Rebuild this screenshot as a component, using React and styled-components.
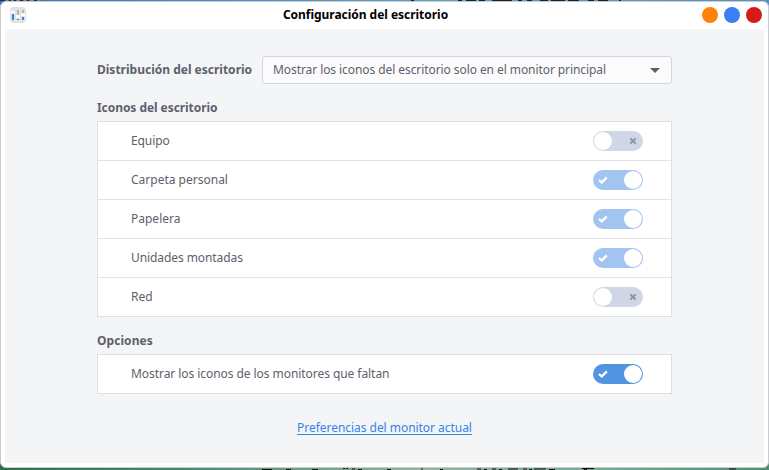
import React from "react";
import styled, { createGlobalStyle } from "styled-components";

const Global = createGlobalStyle`
  * { box-sizing: border-box; }
  body { margin: 0; overflow: hidden; font-family: "Noto Sans", sans-serif; font-size: 12px; color: #5c616c; }
`;

const Desktop = styled.div`
  width: 769px;
  height: 470px;
  padding: 1px 0 2px;
  background:
    linear-gradient(90deg, #3a77b8, #62a4cf 60%, #5590bf) 0 0 / 100% 12px no-repeat,
    linear-gradient(90deg, #2f6d4a, #4a8a6c 25%, #8fb5a5 55%, #6fa892 80%, #4f8d75) 0 100% / 100% 12px no-repeat,
    #c8cacb;
`;

const Strip = styled.svg`
  position: absolute;
  left: 0;
  top: ${(p) => p.$top}px;
`;

const Window = styled.main`
  width: 769px;
  height: 467px;
  display: flex;
  flex-direction: column;
  padding: 0 4px 4px;
  background: #fff;
  border: 1px solid #c9cbcd;
  border-radius: 6px;
`;

const TitleBar = styled.header`
  height: 27px;
  flex: none;
  display: grid;
  grid-template-columns: 72px 1fr 72px;
  align-items: center;
  padding-bottom: 1px;
`;

const AppIcon = styled.svg`
  margin: 0 0 0 5px;
  display: block;
`;

const Title = styled.h1`
  margin: 0;
  font-size: 12px;
  line-height: 16px;
  font-weight: 700;
  letter-spacing: -0.03px;
  color: #000;
  text-align: center;
  white-space: nowrap;
  transform: translateX(-19px);
`;

const Controls = styled.div`
  display: flex;
  justify-content: flex-end;
  gap: 6px;
  padding-right: 2px;
`;

const Control = styled.button`
  width: 16px;
  height: 16px;
  padding: 0;
  border: 0;
  border-radius: 50%;
  background: ${(p) => p.$color};
`;

const Content = styled.section`
  flex: 1;
  display: flex;
  flex-direction: column;
  padding: 27px 92px 0;
  background: #f4f5f7;
`;

const LayoutRow = styled.div`
  display: flex;
  align-items: center;
  justify-content: space-between;
  height: 28px;
`;

const Heading = styled.h2`
  margin: 0;
  font-size: 12px;
  font-weight: 700;
  line-height: 16px;
  white-space: nowrap;
`;

const SectionHeading = styled(Heading)`
  margin: 16px 0 5px;
  letter-spacing: ${(p) => p.$tracking || 0}px;
`;

const Select = styled.button`
  width: 410px;
  height: 28px;
  display: flex;
  align-items: center;
  justify-content: space-between;
  padding: 0 11px 1px 10px;
  border: 1px solid #cfd6e6;
  border-radius: 3px;
  background: #fbfbfc;
  color: inherit;
  font: inherit;
  letter-spacing: -0.075px;
  white-space: nowrap;
`;

const Arrow = styled.svg`
  position: relative;
  top: 1px;
`;

const Card = styled.div`
  border: 1px solid #dcdfe3;
  background: #fff;
`;

const Row = styled.div`
  height: 39px;
  display: flex;
  align-items: center;
  justify-content: space-between;
  padding: 0 28px 0 33px;
  border-bottom: 1px solid #e2e3e5;
  &:last-child { height: 38px; border-bottom: 0; }
`;

const RowLabel = styled.span`
  line-height: 16px;
  letter-spacing: ${(p) => p.$tracking}px;
`;

const Track = styled.span`
  width: 50px;
  height: 20px;
  display: flex;
  flex-direction: ${(p) => (p.$on ? "row-reverse" : "row")};
  align-items: center;
  justify-content: space-between;
  padding: 0 ${(p) => (p.$on ? "1px 0 5px" : "6px 0 1px")};
  border-radius: 10px;
  background: ${(p) => (!p.$on ? "#cfd6e6" : p.$muted ? "#a2c4f0" : "#5294e2")};
`;

const Knob = styled.span`
  width: 18px;
  height: 18px;
  border-radius: 50%;
  background: #fff;
`;

const LinkRow = styled.div`
  margin-top: 26px;
  text-align: center;
  line-height: 16px;
`;

const Link = styled.a`
  color: #3584e4;
  letter-spacing: -0.04px;
  text-decoration: underline;
  text-underline-offset: 2px;
  text-decoration-thickness: 1px;
`;

function Toggle({ on, muted }) {
  return (
    <Track $on={on} $muted={muted} role="switch" aria-checked={on}>
      <Knob />
      {on ? (
        <svg width="10" height="8" viewBox="0 0 10 8">
          <path d="M1 4 3.8 6.4 8.8 1.4" fill="none" stroke="#fff" strokeWidth="2.3" />
        </svg>
      ) : (
        <svg width="8" height="8" viewBox="0 0 8 8">
          <path d="M1.3 1.3 6.7 6.7M6.7 1.3 1.3 6.7" fill="none" stroke="#8b92a2" strokeWidth="1.9" />
        </svg>
      )}
    </Track>
  );
}

const icons = [
  ["Equipo", false, -0.1],
  ["Carpeta personal", true, 0],
  ["Papelera", true, 0],
  ["Unidades montadas", true, -0.08],
  ["Red", false, 0],
];

export default function App() {
  return (
    <>
      <Global />
      <Desktop>
        <Window>
          <TitleBar>
            <AppIcon width="16" height="16" viewBox="0 0 16 16">
              <rect width="16" height="16" rx="4" fill="#e2e2e2" />
              <path d="M8 3v5M13 3v4" stroke="#b4b4b4" strokeWidth="2" />
              <path d="M3 7v6M13 10v3M8 12v1" stroke="#3480df" strokeWidth="2" />
              <path d="M1 4h4v2.5H1zM6 8.2h4v2.6H6zM11 6.3h4v2.7h-4z" fill="#fff" />
            </AppIcon>
            <Title>Configuración del escritorio</Title>
            <Controls>
              <Control $color="#ff8105" aria-label="Minimizar" />
              <Control $color="#3880f4" aria-label="Maximizar" />
              <Control $color="#d51a1a" aria-label="Cerrar" />
            </Controls>
          </TitleBar>
          <Content>
            <LayoutRow>
              <Heading>Distribución del escritorio</Heading>
              <Select>
                Mostrar los iconos del escritorio solo en el monitor principal
                <Arrow width="10" height="5" viewBox="0 0 10 5">
                  <path d="M0 0h10L5 5z" fill="#5c616c" />
                </Arrow>
              </Select>
            </LayoutRow>
            <SectionHeading $tracking={-0.06}>Iconos del escritorio</SectionHeading>
            <Card>
              {icons.map(([name, on, tracking]) => (
                <Row key={name}>
                  <RowLabel $tracking={tracking}>{name}</RowLabel>
                  <Toggle on={on} muted />
                </Row>
              ))}
            </Card>
            <SectionHeading $tracking={0.06}>Opciones</SectionHeading>
            <Card>
              <Row>
                <RowLabel $tracking={-0.06}>Mostrar los iconos de los monitores que faltan</RowLabel>
                <Toggle on />
              </Row>
            </Card>
            <LinkRow>
              <Link>Preferencias del monitor actual</Link>
            </LinkRow>
          </Content>
        </Window>
      </Desktop>
      <Strip $top={0} width="769" height="1" viewBox="0 0 769 1">
        <path d="M0 .5h5M9 .5h2M14 .5h2M20 .5h3M27 .5h2M34 .5h3" stroke="#1c2c4c" />
        <path d="M6 .5h2M11 .5h2M17 .5h2M24 .5h2M31 .5h2M38 .5h1" stroke="#b08a5a" />
        <path d="M411 .5h3M458 .5h4M466 .5h10M479 .5h6M492 .5h20M518 .5h4M527 .5h5M540 .5h8M551 .5h14M568 .5h11M588 .5h6M598 .5h10M619 .5h2" stroke="#15242c" />
      </Strip>
      <Strip $top={468} width="769" height="2" viewBox="0 0 769 2">
        <path d="M262 1.5h10M286 1.5h5M312 1.5h6M343 .5h2M346 .5h2M352 1h3M358 1.5h4M387 1.5h4M421 1h2M440 1.5h3M477 1h4M484 1.5h3M492 1h4M499 1.5h3M508 1h10M523 1h4M529 1.5h3M534 1h12M549 1.5h6M582 .5h12M584 1.5h3M729 1h7" stroke="#0b1512" />
      </Strip>
    </>
  );
}
